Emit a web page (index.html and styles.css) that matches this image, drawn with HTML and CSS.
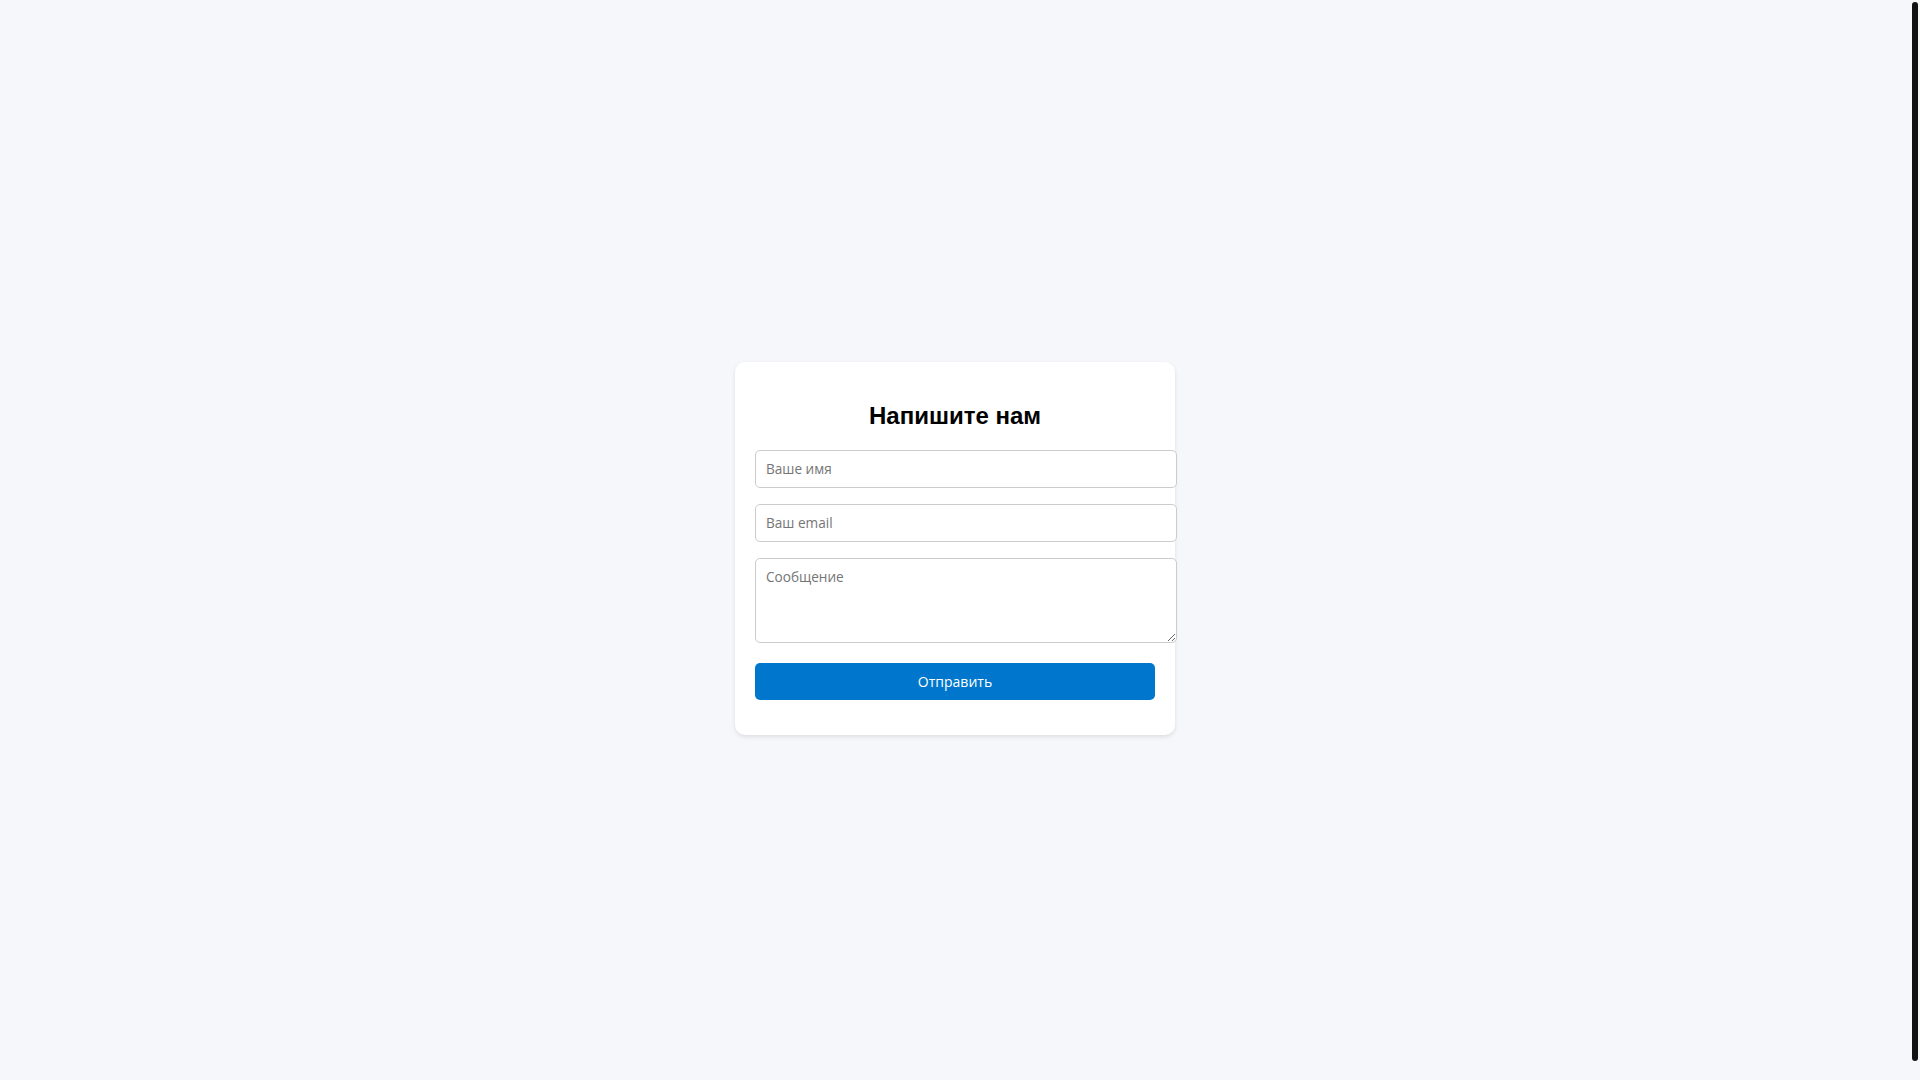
FILE: index.html
```html
<!DOCTYPE html>
<html lang="ru">
<head>
<meta charset="utf-8">
<title>Напишите нам</title>
<link rel="stylesheet" href="styles.css">
</head>
<body>
<div class="card">
  <h2 class="title">Напишите нам</h2>
  <form class="form">
    <input class="field" type="text" placeholder="Ваше имя">
    <input class="field" type="email" placeholder="Ваш email">
    <textarea class="field area" placeholder="Сообщение"></textarea>
    <button class="submit" type="button">Отправить</button>
  </form>
</div>
<div class="scroll-thumb" aria-hidden="true"></div>
</body>
</html>
```
FILE: styles.css
```css
html {
  background: #f5f7fa;
}
body {
  margin: 8px 18px 8px 8px;
  min-height: 100vh;
  display: flex;
  align-items: center;
  justify-content: center;
  background: #f5f7fa;
  font-family: "Liberation Sans", Arial, sans-serif;
}
.scroll-thumb {
  position: fixed;
  top: 2px;
  right: 2px;
  width: 6px;
  height: 1059px;
  background: #111;
  border-radius: 3px;
}
.card {
  width: 400px;
  padding: 20px;
  background: #fff;
  border-radius: 10px;
  box-shadow: 0 2px 4px rgba(0, 0, 0, 0.1);
}
.title {
  margin: 20px 0;
  font-size: 24px;
  font-weight: bold;
  text-align: center;
  color: #000;
  line-height: normal;
}
.form {
  margin: 0 0 15px;
}
.field {
  display: block;
  width: 100%;
  padding: 10px;
  margin: 0 0 16px;
  border: 1px solid #ccc;
  border-radius: 5px;
  font-family: "Open Sans", sans-serif;
  font-size: 13.6px;
  line-height: 16px;
  color: #000;
  background: #fff;
  outline: none;
}
.field::placeholder {
  color: #757575;
}
.area {
  height: 63px;
  margin-bottom: 20px;
  resize: vertical;
}
.submit {
  display: block;
  width: 100%;
  padding: 10px;
  border: none;
  border-radius: 5px;
  background: #0077cc;
  color: #fff;
  font-family: "Open Sans", sans-serif;
  font-size: 14px;
  line-height: 17px;
  cursor: pointer;
}
```
